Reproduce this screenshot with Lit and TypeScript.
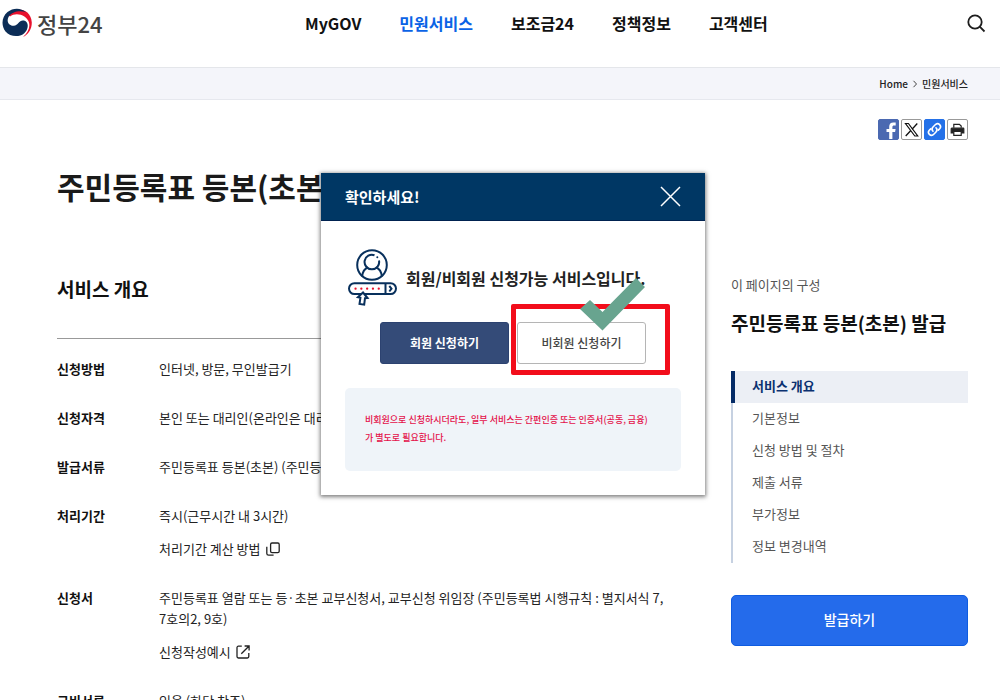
import { LitElement, html, css, svg, nothing } from "lit";
import { customElement, property, state } from "lit/decorators.js";
import { classMap } from "lit/directives/class-map.js";

const windowIcon = svg`<svg class="icon" viewBox="0 0 14 14" width="14" height="14" aria-hidden="true"><rect x="4.6" y="1" width="8.600" height="9.600" rx="1.400" /><path d="M.8 4.800v6.600c0 1 .8 1.800 1.800 1.800h5" /></svg>`;
const externalIcon = svg`<svg class="icon" viewBox="0 0 14 14" width="14" height="14" aria-hidden="true"><path d="M5.800 1.200H2.400C1.600 1.200 1 1.800 1 2.600v9c0 .8.600 1.400 1.400 1.400h9c.8 0 1.400-.6 1.400-1.400V8M8.600 1h4.500v4.500M12.800 1.300 5.300 8.800" /></svg>`;

interface Row {
  term: string;
  text: string;
  link?: string;
  icon?: unknown;
}

const rows: Row[] = [
  { term: "신청방법", text: "인터넷, 방문, 무인발급기" },
  { term: "신청자격", text: "본인 또는 대리인(온라인은 대리인 불가)" },
  { term: "발급서류", text: "주민등록표 등본(초본) (주민등록표)" },
  { term: "처리기간", text: "즉시(근무시간 내 3시간)", link: "처리기간 계산 방법", icon: windowIcon },
  {
    term: "신청서",
    text: "주민등록표 열람 또는 등·초본 교부신청서, 교부신청 위임장 (주민등록법 시행규칙 : 별지서식 7, 7호의2, 9호)",
    link: "신청작성예시",
    icon: externalIcon,
  },
  { term: "구비서류", text: "있음 (하단 참조)" },
];

const base = css`
  * {
    box-sizing: border-box;
    margin: 0;
  }
  a {
    color: inherit;
    text-decoration: none;
  }
  button {
    font: inherit;
    border: 0;
    padding: 0;
    cursor: pointer;
  }
  svg {
    display: block;
    flex: none;
  }
`;

@customElement("site-header")
class SiteHeader extends LitElement {
  static styles = [
    base,
    css`
      :host {
        display: block;
      }
      .bar {
        display: grid;
        grid-template-columns: 305px 1fr auto;
        align-items: center;
        height: 68px;
        padding: 0 14px 22px 0;
        border-bottom: 1px solid #e4e6ea;
      }
      .logo {
        display: flex;
        align-items: center;
        gap: 5px;
        padding-left: 2px;
        font-size: 22px;
        line-height: 28px;
        font-weight: 500;
        color: #444;
      }
      .nav {
        display: flex;
        gap: 38px;
        font-size: 16px;
        line-height: 24px;
        font-weight: 700;
        color: #111;
      }
      .current {
        color: #0b63e6;
      }
      .search {
        background: none;
        color: #1d1d1d;
      }
      .crumbs {
        display: flex;
        justify-content: flex-end;
        align-items: center;
        gap: 4px;
        height: 32px;
        padding: 0 32px;
        background: #f4f5fa;
        border-bottom: 1px solid #e6e8ee;
        font-size: 10px;
        font-weight: 500;
        color: #222;
      }
    `,
  ];

  render() {
    const items = ["MyGOV", "민원서비스", "보조금24", "정책정보", "고객센터"];
    return html`
      <header class="bar">
        <a class="logo" href="#">
          <svg width="30" height="30" viewBox="0 0 30 30" aria-hidden="true">
            <path
              d="M5.500 6C13-1.500 29 0 29.800 14.500C29.800 21 26.500 26.500 21 29C26 24.500 28.300 19.500 27 14.500C25 7 14 3.500 8 8.500Z"
              fill="#e8112d"
            />
            <path
              d="M24 4.200C18 2 9.500 3.500 6.500 9C4 14 7.500 18.300 11.800 17.800C16.500 17.200 17 11.500 22 12.500C27.500 14 26.500 22 22 25.500C17 29.500 8 29 3.500 23.500C-1 17.500-.5 9 5.500 4C11-.5 19-.5 24 4.200Z"
              fill="#0c2d57"
            />
          </svg>
          <span>정부24</span>
        </a>
        <nav class="nav">
          ${items.map(
            (t, i) => html`<a href="#" class=${classMap({ current: i === 1 })}>${t}</a>`
          )}
        </nav>
        <button class="search" aria-label="검색">
          <svg width="20" height="20" viewBox="0 0 20 20" fill="none" stroke="currentColor" stroke-width="1.800">
            <circle cx="9" cy="9" r="6.700" />
            <path d="m13.700 13.700 4.800 4.800" />
          </svg>
        </button>
      </header>
      <nav class="crumbs" aria-label="현재 위치">
        <a href="#">Home</a>
        <svg width="6" height="8" viewBox="0 0 6 8" fill="none" stroke="#444"><path d="m1.500.8 3 3.200-3 3.200" /></svg>
        <a href="#">민원서비스</a>
      </nav>
    `;
  }
}

@customElement("share-links")
class ShareLinks extends LitElement {
  static styles = [
    base,
    css`
      :host {
        display: flex;
        justify-content: flex-end;
        gap: 2px;
      }
      .share {
        display: grid;
        place-items: center;
        width: 21px;
        height: 21px;
        border: 1px solid #999;
        border-radius: 2px;
        background: #fff;
        overflow: hidden;
      }
      .facebook {
        background: #4b69b1;
        border-color: #4b69b1;
      }
      .link {
        background: #2471e8;
        border-color: #2471e8;
      }
    `,
  ];

  render() {
    return html`
      <button class="share facebook" aria-label="페이스북">
        <svg width="19" height="19" viewBox="0 0 19 19">
          <path d="M10.200 19v-7H7.500V9h2.700V6.800c0-2.700 1.500-4.200 4.100-4.200h2.400v2.900h-1.600c-1.300 0-1.700.6-1.700 1.600V9h3.200l-.5 3h-2.700v7Z" fill="#fff" />
        </svg>
      </button>
      <button class="share" aria-label="엑스">
        <svg width="19" height="19" viewBox="0 0 19 19" fill="none" stroke="#111">
          <path d="M3.500 3.500h2.900l9.300 12.500h-2.900Z" stroke-width="1.200" />
          <path d="m15.300 3.500-5.300 5.700M8.600 10.700 3.700 16" stroke-width="1.300" />
        </svg>
      </button>
      <button class="share link" aria-label="링크 복사">
        <svg width="19" height="19" viewBox="0 0 19 19" fill="none" stroke="#fff" stroke-width="1.600" stroke-linecap="round">
          <path d="M8 11.200a3 3 0 0 1 0-4.200l2.700-2.700a3 3 0 0 1 4.200 4.200l-1.600 1.600" />
          <path d="M11 7.800a3 3 0 0 1 0 4.200l-2.700 2.700a3 3 0 0 1-4.200-4.200l1.600-1.600" />
        </svg>
      </button>
      <button class="share" aria-label="인쇄">
        <svg width="19" height="19" viewBox="0 0 19 19" fill="none" stroke="#222" stroke-width="1.200">
          <path d="M5.800 7.800V4.300h5.600l1.800 1.700v1.800" />
          <path d="M3.800 8.200h11.400a.6.6 0 0 1 .6.600v4.200H3.200V8.800a.6.6 0 0 1 .6-.6Z" fill="#222" />
          <path d="M5.800 11.300h7.400v4H5.800Z" fill="#fff" />
        </svg>
      </button>
    `;
  }
}

@customElement("page-aside")
class PageAside extends LitElement {
  @state() private active = 0;

  static styles = [
    base,
    css`
      :host {
        display: block;
      }
      .label {
        font-size: 13px;
        line-height: 20px;
        color: #555;
      }
      .title {
        margin: 14px 0 34px;
        font-size: 19px;
        line-height: 28px;
        font-weight: 700;
        color: #111;
        white-space: nowrap;
      }
      .toc {
        display: flex;
        flex-direction: column;
        font-size: 13px;
        line-height: 29px;
        color: #555;
      }
      .item {
        padding: 0 0 3px 19px;
        border-left: 2px solid #c6d1e1;
      }
      .active {
        padding-left: 17px;
        border-left: 4px solid #052b66;
        background: #eceff5;
        font-weight: 700;
        color: #0b3170;
      }
      .issue {
        width: 100%;
        height: 51px;
        margin-top: 32px;
        padding-bottom: 2px;
        border: 1px solid #0f5ce0;
        border-radius: 5px;
        background: #246beb;
        color: #fff;
        font-size: 14px;
        font-weight: 500;
      }
    `,
  ];

  render() {
    const items = ["서비스 개요", "기본정보", "신청 방법 및 절차", "제출 서류", "부가정보", "정보 변경내역"];
    return html`
      <p class="label">이 페이지의 구성</p>
      <h2 class="title">주민등록표 등본(초본) 발급</h2>
      <nav class="toc">
        ${items.map(
          (t, i) => html`<a
            href="#"
            class=${classMap({ item: true, active: i === this.active })}
            @click=${(e: Event) => {
              e.preventDefault();
              this.active = i;
            }}
            >${t}</a
          >`
        )}
      </nav>
      <button class="issue">발급하기</button>
    `;
  }
}

@customElement("confirm-dialog")
class ConfirmDialog extends LitElement {
  @property({ type: Boolean, reflect: true }) open = false;

  static styles = [
    base,
    css`
      :host {
        display: none;
      }
      :host([open]) {
        display: block;
      }
      .dialog {
        position: relative;
        background: #fff;
        box-shadow: 0 1px 4px 1px rgba(0, 0, 0, 0.5);
      }
      .head {
        display: flex;
        justify-content: space-between;
        align-items: center;
        height: 48px;
        padding: 0 24px;
        background: #003764;
        border-bottom: 1px solid #002250;
        color: #fff;
      }
      .heading {
        font-size: 15px;
        font-weight: 700;
      }
      .close {
        background: none;
        color: #fff;
      }
      .body {
        padding: 28px 24px 24px;
      }
      .intro {
        display: flex;
        align-items: center;
        gap: 9px;
        padding-left: 3px;
        font-size: 16px;
        line-height: 24px;
        font-weight: 700;
        color: #222;
        white-space: nowrap;
      }
      .actions {
        display: flex;
        gap: 8px;
        margin: 16px 0 24px;
        padding-left: 35px;
      }
      .action {
        width: 129px;
        height: 42px;
        padding-bottom: 2px;
        border: 1px solid #2c4270;
        border-radius: 3px;
        background: #344b78;
        color: #fff;
        font-size: 12px;
        font-weight: 700;
      }
      .guest {
        border-color: #b5b5b5;
        background: #fff;
        color: #444;
        font-weight: 500;
      }
      .highlight {
        position: absolute;
        left: 190px;
        top: 131px;
        width: 159px;
        height: 71px;
        border: 5px solid #f20d1b;
        border-radius: 2px;
        pointer-events: none;
      }
      .note {
        padding: 23px 20px 24px;
        border-radius: 5px;
        background: #eff4f9;
        color: #e4114a;
        font-size: 9px;
        line-height: 18px;
        font-weight: 500;
        word-break: keep-all;
      }
      .check {
        position: absolute;
        left: 259px;
        top: 105px;
        pointer-events: none;
      }
    `,
  ];

  render() {
    return html`
      <section class="dialog" role="dialog" aria-labelledby="heading">
        <header class="head">
          <h2 class="heading" id="heading">확인하세요!</h2>
          <button class="close" aria-label="닫기" @click=${() => (this.open = false)}>
            <svg width="21" height="21" viewBox="0 0 21 21" stroke="currentColor" stroke-width="1.500">
              <path d="m1 1 19 19M20 1 1 20" />
            </svg>
          </button>
        </header>
        <div class="body">
          <p class="intro">
            <svg width="49" height="57" viewBox="0 0 49 57" fill="none" stroke="#08305c" stroke-width="2">
              <circle cx="24" cy="16" r="14.800" />
              <path d="M26.500 6.200A7.300 7.300 0 1 0 31 11.500" />
              <path d="M14.200 27.500c.4-5 2.500-8 6-9M33.800 27.500c-.4-5-2.500-8-6-9" />
              <circle cx="29.300" cy="8.300" r="1" fill="#08305c" stroke="none" />
              <rect x="1" y="34.200" width="47" height="10.800" rx="5.400" fill="#fff" />
              <path d="M37.500 34.500V45M41.300 37l2.200 2.700-2.200 2.800" />
              <path d="M7.500 39.700h25" stroke="#e8112d" stroke-width="2.200" stroke-linecap="round" stroke-dasharray=".1 5.700" />
              <path d="m15 43.500 4.500 5.500-2.500.2-.8 6.500-4.700-.7.900-6.200-2.500-.6Z" fill="#fff" />
            </svg>
            <span>회원/비회원 신청가능 서비스입니다.</span>
          </p>
          <div class="actions">
            <button class="action">회원 신청하기</button>
            <button class="action guest">비회원 신청하기</button>
          </div>
          <p class="note">
            비회원으로 신청하시더라도, 일부 서비스는 간편인증 또는 인증서(공동, 금융)<br />가 별도로 필요합니다.
          </p>
        </div>
        <div class="highlight"></div>
        <svg class="check" width="66" height="53" viewBox="0 0 66 53" aria-hidden="true">
          <path d="m0 31 10-9 12.500 12L56 0l9 9-42.500 43.500Z" fill="#68a48f" />
        </svg>
      </section>
    `;
  }
}

@customElement("app-root")
class AppRoot extends LitElement {
  static styles = [
    base,
    css`
      :host {
        display: block;
        position: relative;
        background: #fff;
        color: #222;
        font-family: "Noto Sans CJK KR", sans-serif;
        font-size: 13px;
        line-height: 21px;
      }
      .page {
        padding: 19px 32px 0 57px;
      }
      .title {
        margin-top: 25px;
        font-size: 30px;
        line-height: 42px;
        font-weight: 700;
        color: #1a1a1a;
      }
      .columns {
        display: grid;
        grid-template-columns: minmax(0, 1fr) 237px;
        gap: 64px;
        align-items: start;
        margin-top: 68px;
      }
      .subtitle {
        font-size: 19px;
        line-height: 28px;
        font-weight: 700;
        color: #111;
      }
      .rows {
        display: flex;
        flex-direction: column;
        gap: 28px;
        margin-top: 35px;
        padding-top: 19px;
        border-top: 1px solid #999;
      }
      .row {
        display: grid;
        grid-template-columns: 102px minmax(0, 1fr);
        word-break: keep-all;
      }
      .term {
        font-weight: 700;
        color: #111;
      }
      .more {
        display: flex;
        align-items: center;
        gap: 5px;
        margin-top: 12px;
      }
      .icon {
        fill: none;
        stroke: #222;
        stroke-width: 1.3px;
      }
      .popup {
        position: absolute;
        left: 321px;
        top: 173px;
        width: 384px;
      }
    `,
  ];

  render() {
    return html`
      <site-header></site-header>
      <main class="page">
        <share-links></share-links>
        <h1 class="title">주민등록표 등본(초본) 발급</h1>
        <div class="columns">
          <section>
            <h2 class="subtitle">서비스 개요</h2>
            <dl class="rows">
              ${rows.map(
                (r) => html`<div class="row">
                  <dt class="term">${r.term}</dt>
                  <dd>
                    <p>${r.text}</p>
                    ${r.link ? html`<a class="more" href="#">${r.link}${r.icon}</a>` : nothing}
                  </dd>
                </div>`
              )}
            </dl>
          </section>
          <page-aside></page-aside>
        </div>
      </main>
      <confirm-dialog class="popup" open></confirm-dialog>
    `;
  }
}
